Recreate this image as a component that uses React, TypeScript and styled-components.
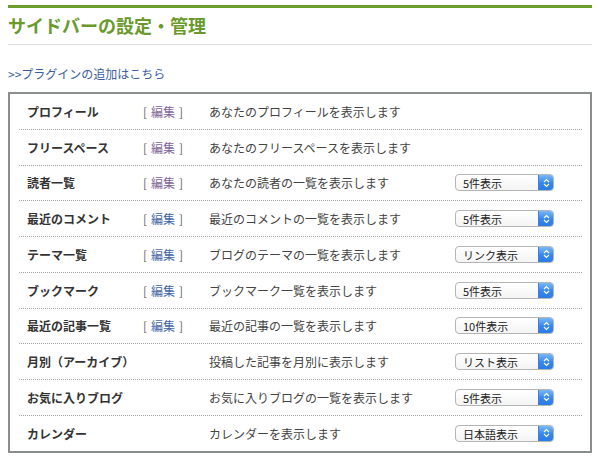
import React from "react";
import styled, { createGlobalStyle } from "styled-components";

interface Plugin {
	name: string;
	editable: boolean;
	visited?: boolean;
	description: string;
	option?: string;
}

const plugins: Array<Plugin> = [
	{ name: "プロフィール", editable: true, visited: true, description: "あなたのプロフィールを表示します" },
	{ name: "フリースペース", editable: true, visited: true, description: "あなたのフリースペースを表示します" },
	{ name: "読者一覧", editable: true, visited: true, description: "あなたの読者の一覧を表示します", option: "5件表示" },
	{ name: "最近のコメント", editable: true, description: "最近のコメントの一覧を表示します", option: "5件表示" },
	{ name: "テーマ一覧", editable: true, description: "ブログのテーマの一覧を表示します", option: "リンク表示" },
	{ name: "ブックマーク", editable: true, description: "ブックマーク一覧を表示します", option: "5件表示" },
	{ name: "最近の記事一覧", editable: true, description: "最近の記事の一覧を表示します", option: "10件表示" },
	{ name: "月別（アーカイブ）", editable: false, description: "投稿した記事を月別に表示します", option: "リスト表示" },
	{ name: "お気に入りブログ", editable: false, description: "お気に入りブログの一覧を表示します", option: "5件表示" },
	{ name: "カレンダー", editable: false, description: "カレンダーを表示します", option: "日本語表示" },
];

const GlobalStyle = createGlobalStyle`
	body {
		margin: 0;
		padding: 5px 8px 0;
		background: #fff;
		font-family: "Noto Sans CJK JP", "Noto Sans", sans-serif;
		color: #333;
	}
`;

const Page = styled.div`
	width: 584px;
`;

const TitleWrap = styled.div`
	border-top: 3px solid #6b9e2b;
	border-bottom: 1px solid #dedede;
	padding: 5px 0 7px;
`;

const Title = styled.h1`
	margin: 0;
	font-size: 18px;
	line-height: 24px;
	font-weight: bold;
	color: #6a9a2c;
`;

const AddLink = styled.a`
	display: block;
	margin-top: 21px;
	font-size: 12px;
	line-height: 16px;
	color: #3b5d9f;
	text-decoration: none;
`;

const Box = styled.div`
	margin-top: 10px;
	border: 2px solid #8b8e8e;
	padding: 0 8px 0 9px;
`;

const Row = styled.div<{ $last?: boolean }>`
	display: grid;
	grid-template-columns: 116px 66px 246px 1fr;
	align-items: center;
	height: 34.75px;
	border-bottom: ${(p) => (p.$last ? "none" : "1px dotted #a0a0a0")};
	font-size: 12px;
`;

const Cell = styled.div`
	padding-left: 8px;
	white-space: nowrap;
`;

const Name = styled(Cell)`
	font-weight: bold;
	color: #333;
`;

const Edit = styled(Cell)`
	color: #666;
`;

const EditLink = styled.a<{ $visited?: boolean }>`
	color: ${(p) => (p.$visited ? "#82659a" : "#4466a6")};
	text-decoration: none;
	margin: 0 4px;
`;

const Description = styled(Cell)`
	color: #444;
`;

const SelectBox = styled.div`
	display: flex;
	width: 99px;
	height: 17px;
	box-sizing: border-box;
	border: 1px solid #b5b5b5;
	border-radius: 4px;
	background: linear-gradient(#ffffff, #f4f4f4);
	overflow: hidden;
`;

const SelectLabel = styled.span`
	flex: 1;
	padding-left: 7px;
	font-size: 11px;
	line-height: 16px;
	color: #222;
`;

const SelectButton = styled.span`
	width: 14px;
	display: flex;
	align-items: center;
	justify-content: center;
	background: linear-gradient(#7ab8f7, #3486ec 55%, #2b7ce6);
	border-left: 1px solid #3a7fd8;
`;

const Chevrons = () => (
	<svg width="7" height="10" viewBox="0 0 7 10">
		<path d="M1 4 L3.5 1.5 L6 4 M1 6 L3.5 8.5 L6 6" stroke="#fff" strokeWidth="1.2" fill="none" />
	</svg>
);

const App = (): JSX.Element => {
	return (
		<Page>
			<GlobalStyle />
			<TitleWrap>
				<Title>サイドバーの設定・管理</Title>
			</TitleWrap>
			<AddLink href="#">&gt;&gt;プラグインの追加はこちら</AddLink>
			<Box>
				{plugins.map((item, i) => (
					<Row key={item.name} $last={i === plugins.length - 1}>
						<Name>{item.name}</Name>
						<Edit>
							{item.editable && (
								<>
									[<EditLink href="#" $visited={item.visited}>編集</EditLink>]
								</>
							)}
						</Edit>
						<Description>{item.description}</Description>
						<Cell>
							{item.option && (
								<SelectBox>
									<SelectLabel>{item.option}</SelectLabel>
									<SelectButton>
										<Chevrons />
									</SelectButton>
								</SelectBox>
							)}
						</Cell>
					</Row>
				))}
			</Box>
		</Page>
	);
};

export default App;
